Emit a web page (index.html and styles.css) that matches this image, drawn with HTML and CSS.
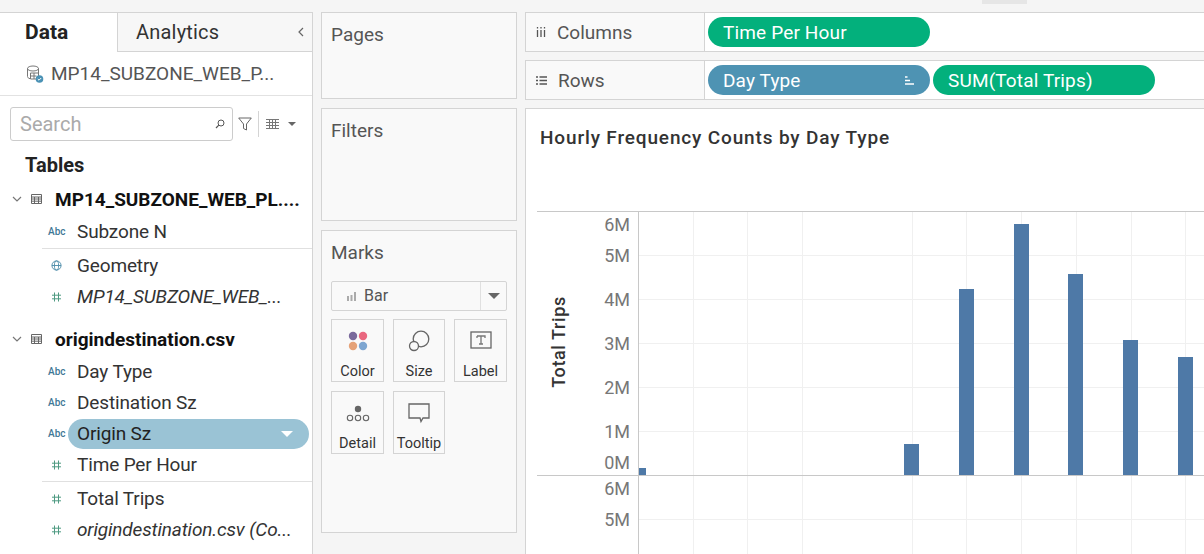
FILE: index.html
```html
<!DOCTYPE html>
<html lang="en">
<head>
<meta charset="utf-8">
<title>Hourly Frequency Counts by Day Type</title>
<link rel="stylesheet" href="styles.css">
</head>
<body>
<svg class="defs" width="0" height="0">
  <symbol id="tbl" viewBox="0 0 11 10"><path d="M.5.5h10v9H.5zM.5 3h10M.5 5h10M.5 7.2h10M3.500 3v6.500M7.500 3v6.500" fill="none" stroke="#666" stroke-width="1"/></symbol>
  <symbol id="hash" viewBox="0 0 10 10"><path d="M3 .5v9M7 .5v9M.5 3.200h9M.5 6.800h9" fill="none" stroke="#4f9a82" stroke-width="1"/></symbol>
  <symbol id="chev" viewBox="0 0 10 6"><path d="M1 1l4 4 4-4" fill="none" stroke="#777" stroke-width="1.200"/></symbol>
</svg>
<div class="topmark"></div>
<main class="app">
  <aside class="side">
    <div class="tabs">
      <div class="tab active">Data</div>
      <div class="tab other">Analytics<svg class="collapse" viewBox="0 0 6 10" width="6" height="10"><path d="M5 1L1 5l4 4" fill="none" stroke="#666" stroke-width="1.200"/></svg></div>
    </div>
    <div class="source">
      <svg class="srcicon" viewBox="0 0 18 18" width="18" height="18"><g fill="none" stroke="#777" stroke-width="1"><ellipse cx="7" cy="3.500" rx="5.500" ry="2.500"/><path d="M1.500 3.500v8c0 1 1 1.800 2.500 2.200M12.500 3.500V8"/><path d="M4.500 8h8v6h-8zM4.500 11h6M8 8v6"/></g><circle cx="13.500" cy="14" r="3.800" fill="#4b92b5"/><path d="M11.800 14l1.200 1.200 2.200-2.200" fill="none" stroke="#fff" stroke-width="1"/></svg>
      <span>MP14_SUBZONE_WEB_P...</span>
    </div>
    <div class="tools">
      <div class="search"><span>Search</span>
        <svg viewBox="0 0 10 10" width="10" height="10"><circle cx="6" cy="4" r="3" fill="none" stroke="#555" stroke-width="1"/><path d="M3.800 6.200L1 9" stroke="#555" stroke-width="1.200"/></svg>
      </div>
      <svg class="funnel" viewBox="0 0 14 14" width="14" height="14"><path d="M.7 1h12.600L8.500 7v6l-3-1.500V7z" fill="none" stroke="#666" stroke-width="1"/></svg>
      <div class="sep"></div>
      <svg class="listicon" viewBox="0 0 13 10" width="13" height="10"><path d="M0 .5h13M0 3.500h13M0 6.500h13M0 9.500h13M3.500 0v10M6.500 0v10M9.500 0v10" fill="none" stroke="#777" stroke-width="1"/></svg>
      <i class="caret small"></i>
    </div>
    <h2 class="tables">Tables</h2>
    <div class="tree">
      <div class="group first"><svg class="chev" width="10" height="6"><use href="#chev"/></svg><svg class="tblicon" width="11" height="10"><use href="#tbl"/></svg><b>MP14_SUBZONE_WEB_PL....</b></div>
      <div class="row"><span class="abc">Abc</span><span>Subzone N</span></div>
      <div class="rule"></div>
      <div class="row"><svg class="ficon" viewBox="0 0 12 12" width="11" height="11"><g fill="none" stroke="#4a8ba8" stroke-width="1"><circle cx="6" cy="6" r="5"/><ellipse cx="6" cy="6" rx="2.300" ry="5"/><path d="M1 6h10"/></g></svg><span>Geometry</span></div>
      <div class="row"><svg class="ficon" width="10" height="10"><use href="#hash"/></svg><em>MP14_SUBZONE_WEB_...</em></div>
      <div class="group second"><svg class="chev" width="10" height="6"><use href="#chev"/></svg><svg class="tblicon" width="11" height="10"><use href="#tbl"/></svg><b>origindestination.csv</b></div>
      <div class="row"><span class="abc">Abc</span><span>Day Type</span></div>
      <div class="row"><span class="abc">Abc</span><span>Destination Sz</span></div>
      <div class="row"><span class="abc">Abc</span><span class="picked">Origin Sz<i class="caret white"></i></span></div>
      <div class="row"><svg class="ficon" width="10" height="10"><use href="#hash"/></svg><span>Time Per Hour</span></div>
      <div class="rule"></div>
      <div class="row"><svg class="ficon" width="10" height="10"><use href="#hash"/></svg><span>Total Trips</span></div>
      <div class="row"><svg class="ficon" width="10" height="10"><use href="#hash"/></svg><em>origindestination.csv (Co...</em></div>
    </div>
  </aside>

  <section class="cards">
    <div class="card pages">Pages</div>
    <div class="card filters">Filters</div>
    <div class="card marks">
      <div class="markhead">Marks</div>
      <div class="marktype">
        <div class="markname"><svg viewBox="0 0 10 9" width="10" height="9"><path d="M1 4h2v5H1zM4.500 3h2v6h-2zM8 0h2v9H8z" fill="#aaa"/></svg>Bar</div>
        <div class="markdrop"><i class="caret"></i></div>
      </div>
      <div class="markgrid">
        <div class="mark"><svg viewBox="0 0 22 22" width="22" height="22"><circle cx="6" cy="6" r="4.200" fill="#7a6a9c"/><circle cx="16" cy="6" r="4.200" fill="#e9677f"/><circle cx="6" cy="16" r="4.200" fill="#e5a278"/><circle cx="16" cy="16" r="4.200" fill="#7ea6d1"/></svg><span>Color</span></div>
        <div class="mark"><svg viewBox="0 0 22 22" width="22" height="22"><g fill="none" stroke="#666" stroke-width="1.300"><circle cx="13" cy="9" r="7.800"/><circle cx="6" cy="16" r="4.500" fill="#f9f9f9"/></g></svg><span>Size</span></div>
        <div class="mark"><svg viewBox="0 0 22 20" width="22" height="20"><rect x="1" y="2" width="20" height="16" fill="none" stroke="#666" stroke-width="1.300"/><path d="M7 6h8v2M11 6v8M9 14h4M7 8V6" fill="none" stroke="#777" stroke-width="1.300"/></svg><span>Label</span></div>
        <div class="mark"><svg viewBox="0 0 24 22" width="24" height="22"><circle cx="12" cy="7" r="3.200" fill="#666"/><g fill="none" stroke="#666" stroke-width="1.100"><circle cx="4" cy="16" r="2.700"/><circle cx="12" cy="16" r="2.700"/><circle cx="20" cy="16" r="2.700"/></g></svg><span>Detail</span></div>
        <div class="mark"><svg viewBox="0 0 22 22" width="22" height="22"><path d="M1 2h20v14h-6l-2 3.500-1-3.500H1z" fill="none" stroke="#666" stroke-width="1.300"/></svg><span>Tooltip</span></div>
      </div>
    </div>
  </section>

  <section class="work">
    <div class="shelf">
      <div class="shelfname"><svg viewBox="0 0 10 10" width="10" height="10"><path d="M1.500 0v1.500M5 0v1.500M8.500 0v1.500M1.500 3v7M5 3v7M8.500 3v7" stroke="#555" stroke-width="1.300"/></svg>Columns</div>
      <div class="pills"><div class="pill green">Time Per Hour</div></div>
    </div>
    <div class="shelf">
      <div class="shelfname"><svg viewBox="0 0 11 9" width="11" height="9"><path d="M0 1h2M3.500 1H11M0 4.500h2M3.500 4.500H11M0 8h2M3.500 8H11" stroke="#555" stroke-width="1.300"/></svg>Rows</div>
      <div class="pills">
        <div class="pill blue">Day Type<svg viewBox="0 0 9 9" width="9" height="9"><path d="M0 1h2.500M0 4.500h5M0 8h9" stroke="#fff" stroke-width="1.400"/></svg></div>
        <div class="pill green">SUM(Total Trips)</div>
      </div>
    </div>
    <div class="view">
      <h1>Hourly Frequency Counts by Day Type</h1>
      <svg class="chart" viewBox="526 200 678 354" width="678" height="354">
        <g class="gridv">
          <path d="M693.500 211V554M747.500 211V554M802.500 211V554M912.500 211V554M966.500 211V554M1021.500 211V554M1076.500 211V554M1131.500 211V554M1185.500 211V554"/>
        </g>
        <g class="gridh">
          <path d="M638 255.500H1204M638 299.500H1204M638 343.500H1204M638 387.500H1204M638 431.500H1204M638 519.500H1204"/>
        </g>
        <path class="axis" d="M537 211.500H1204M537 475.500H1204M638.500 211V554"/>
        <g class="bars">
          <rect x="639" y="468" width="7" height="7"/>
          <rect x="904" y="444" width="15" height="31"/>
          <rect x="959" y="289" width="15" height="186"/>
          <rect x="1014" y="224" width="15" height="251"/>
          <rect x="1068" y="274" width="15" height="201"/>
          <rect x="1123" y="340" width="15" height="135"/>
          <rect x="1178" y="357" width="15" height="118"/>
        </g>
        <g class="ticks">
          <text x="630" y="231">6M</text>
          <text x="630" y="262">5M</text>
          <text x="630" y="306">4M</text>
          <text x="630" y="350">3M</text>
          <text x="630" y="394">2M</text>
          <text x="630" y="438">1M</text>
          <text x="630" y="469">0M</text>
          <text x="630" y="495">6M</text>
          <text x="630" y="526">5M</text>
        </g>
        <text class="axistitle" transform="translate(565 342) rotate(-90)">Total Trips</text>
      </svg>
    </div>
  </section>
</main>
</body>
</html>
```
FILE: styles.css
```css
* { box-sizing: border-box; }
html, body { margin: 0; height: 554px; overflow: hidden; background: #f5f5f5; }
body { font-family: Roboto, "Liberation Sans", sans-serif; color: #333; position: relative; }
.defs { position: absolute; }
.topmark { position: absolute; left: 982px; top: 0; width: 45px; height: 4px; background: #e6e6e6; }

.app { display: flex; height: 554px; padding-top: 12px; align-items: stretch; }

/* sidebar */
.side { width: 313px; flex: none; background: #fff; border-top: 1px solid #d4d4d4; border-right: 1px solid #d4d4d4; display: flex; flex-direction: column; overflow: hidden; }
.tabs { display: flex; height: 39px; flex: none; }
.tab { font-size: 20px; line-height: 38px; }
.tab.active { width: 117px; padding-left: 25px; font-size: 21px; font-weight: 700; color: #222; }
.tab.other { flex: 1; padding-left: 18px; letter-spacing: .2px; background: #f7f7f7; border-left: 1px solid #d4d4d4; border-bottom: 1px solid #d4d4d4; display: flex; align-items: center; justify-content: space-between; padding-right: 8px; }
.source { height: 44px; flex: none; display: flex; align-items: center; padding-left: 26px; gap: 7px; font-size: 19px; color: #555; border-bottom: 1px solid #e2e2e2; }
.tools { display: flex; align-items: center; height: 34px; margin-top: 11px; padding-left: 10px; flex: none; }
.search { width: 223px; height: 34px; border: 1px solid #ccc; border-radius: 3px; display: flex; align-items: center; justify-content: space-between; padding: 0 7px 0 9px; font-size: 20px; color: #aaa; }
.funnel { margin-left: 5px; }
.sep { width: 1px; height: 26px; background: #d4d4d4; margin: 0 7px 0 6px; }
.tables { margin: 12px 0 0 25px; font-size: 20px; line-height: 24px; font-weight: 700; color: #222; }
.tree { display: flex; flex-direction: column; font-size: 19px; color: #333; }
.group { display: flex; align-items: center; height: 30px; margin-bottom: 2px; font-size: 19px; color: #111; padding-left: 12px; }
.group.first { margin-top: 7px; }
.group.second { margin-top: 12px; }
.group b { margin-left: 13px; font-weight: 700; white-space: nowrap; }
.tblicon { margin-left: 9px; }
.row { display: flex; align-items: center; height: 31px; padding-left: 48px; white-space: nowrap; letter-spacing: -.15px; }
.abc { width: 29px; flex: none; font-size: 10px; font-weight: 500; letter-spacing: 0; color: #3f7896; }
.ficon { width: 11px; flex: none; margin: 0 15px 0 3px; }
.row em { font-style: italic; }
.rule { height: 1px; background: #e0e0e0; margin: 1px 0 1px 42px; }
.picked { margin-left: -9px; width: 241px; height: 30px; border-radius: 15px; background: #9ac3d5; padding: 0 16px 0 9px; display: flex; align-items: center; justify-content: space-between; color: #222; }

.caret { display: inline-block; width: 0; height: 0; border-left: 6px solid transparent; border-right: 6px solid transparent; border-top: 6px solid #666; }
.caret.small { border-left-width: 4px; border-right-width: 4px; border-top-width: 4px; margin-left: 9px; }
.caret.white { border-left-width: 6px; border-right-width: 6px; border-top-color: #fff; }

/* middle cards */
.cards { width: 204px; flex: none; padding: 0 0 0 8px; display: flex; flex-direction: column; gap: 9px; }
.card { width: 196px; background: #f9f9f9; border: 1px solid #d4d4d4; padding: 11px 9px; font-size: 19px; color: #555; line-height: 22px; }
.pages { height: 87px; }
.filters { height: 113px; }
.marks { height: 303px; }
.markhead { height: 39px; }
.marktype { display: flex; height: 30px; border: 1px solid #d4d4d4; border-radius: 2px; background: #f9f9f9; font-size: 16px; }
.markname { flex: 1; display: flex; align-items: center; gap: 8px; padding-left: 14px; color: #555; }
.markdrop { width: 26px; border-left: 1px solid #e0e0e0; display: flex; align-items: center; justify-content: center; }
.markgrid { display: grid; grid-template-columns: 53px 52px 53px; grid-auto-rows: 63px; column-gap: 9px; row-gap: 9px; margin-top: 8px; }
.mark { border: 1px solid #d4d4d4; display: flex; flex-direction: column; align-items: center; justify-content: space-between; padding: 10px 0 0; font-size: 14.500px; line-height: 19px; color: #333; }

/* worksheet */
.work { flex: 1; min-width: 0; padding-left: 8px; display: flex; flex-direction: column; gap: 8px; }
.shelf { height: 40px; flex: none; display: flex; border: 1px solid #d4d4d4; border-right: 0; background: #fff; }
.shelfname { width: 179px; flex: none; background: #f9f9f9; border-right: 1px solid #d4d4d4; display: flex; align-items: center; gap: 11px; padding-left: 10px; font-size: 19px; color: #555; }
.pills { display: flex; gap: 3px; padding: 4px 0 0 3px; }
.pill { width: 222px; height: 30px; border-radius: 15px; color: #fff; font-size: 19px; letter-spacing: .15px; display: flex; align-items: center; justify-content: space-between; padding: 0 16px 0 15px; }
.green { background: #03b07c; }
.blue { background: #4e93b3; }
.view { flex: 1; background: #fff; border: 1px solid #d4d4d4; border-right: 0; border-bottom: 0; padding-top: 17px; min-height: 0; overflow: hidden; }
.view h1 { margin: 0 0 0 14px; height: 74px; font-size: 19px; line-height: 24px; font-weight: 500; letter-spacing: .85px; color: #333; }
.chart { display: block; }
.gridv path, .gridh path { fill: none; stroke: #f0f0f0; stroke-width: 1; }
.axis { fill: none; stroke: #c8c8c8; stroke-width: 1; }
.bars rect { fill: #4e79a7; }
.ticks text { font-size: 18px; fill: #777; text-anchor: end; }
.axistitle { font-size: 18px; font-weight: 500; letter-spacing: .6px; fill: #333; text-anchor: middle; }
```
